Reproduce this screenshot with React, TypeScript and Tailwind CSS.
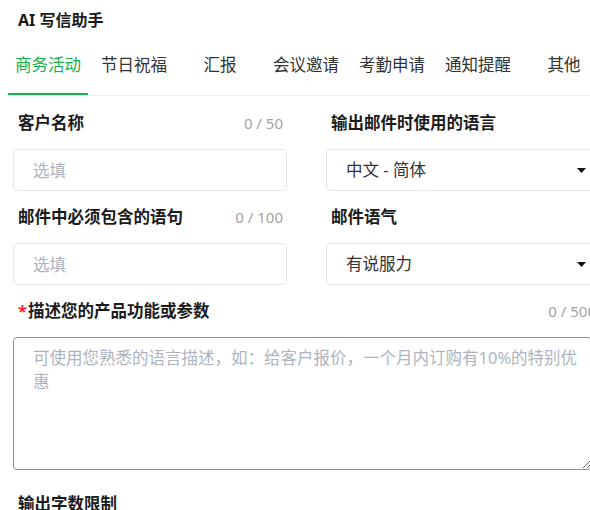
import * as React from "react";

const tabs = ["商务活动", "节日祝福", "汇报", "会议邀请", "考勤申请", "通知提醒", "其他"];

function Caret() {
  return (
    <svg width="9" height="5" viewBox="0 0 9 5" className="shrink-0">
      <path d="M0 0h9L4.5 5z" fill="#111" />
    </svg>
  );
}

function FieldLabel({ text, count, required }: { text: string; count?: string; required?: boolean }) {
  return (
    <div className="flex h-[24px] items-center justify-between pl-[5px] pr-[4px]">
      <span className="text-[16.5px] font-bold text-[#1b1b1b]">
        {required && <span className="mr-[1px] text-[#f5222d]">*</span>}
        {text}
      </span>
      {count && <span className="text-[15px] text-[#a3a3a3]">{count}</span>}
    </div>
  );
}

function TextInput() {
  return (
    <input
      className="mt-[14px] h-[42px] w-full rounded-[4px] border border-[#e8e8e8] bg-white px-[19px] text-[16.5px] text-[#333] outline-none placeholder:text-[#adb4c0]"
      placeholder="选填"
    />
  );
}

function SelectBox({ value }: { value: string }) {
  return (
    <div className="mt-[14px] flex h-[42px] w-full items-center justify-between rounded-[4px] border border-[#e8e8e8] bg-white pl-[19px] pr-[13px]">
      <span className="text-[16.5px] text-[#333]">{value}</span>
      <Caret />
    </div>
  );
}

export default function App() {
  const [active, setActive] = React.useState(0);

  return (
    <div className="h-[510px] w-[590px] overflow-hidden bg-white font-['Noto_Sans','Noto_Sans_CJK_SC',sans-serif]">
      <div className="w-[640px]">
        <div className="mt-[9px] flex h-[22px] items-center pl-[18px] text-[16px] font-bold text-[#1a1a1a]">
          AI 写信助手
        </div>

        {/* tab bar */}
        <div className="ml-[8px] mt-[22px] flex gap-[6px] border-b border-[#ececec]">
          {tabs.map((t, i) => (
            <button
              key={t}
              onClick={() => setActive(i)}
              className={
                "relative w-[80px] pb-[18px] text-center text-[16.5px] leading-[24px] " +
                (i === active ? "text-[#17b04c]" : "text-[#333]")
              }
            >
              {t}
              {i === active && <span className="absolute bottom-0 left-0 h-[2px] w-full bg-[#17b04c]" />}
            </button>
          ))}
        </div>

        <div className="ml-[13px] mt-[15px] w-[587px]">
          <div className="grid grid-cols-2 gap-x-[39px] gap-y-[14px]">
            <div>
              <FieldLabel text="客户名称" count="0 / 50" />
              <TextInput />
            </div>
            <div>
              <FieldLabel text="输出邮件时使用的语言" />
              <SelectBox value="中文 - 简体" />
            </div>
            <div>
              <FieldLabel text="邮件中必须包含的语句" count="0 / 100" />
              <TextInput />
            </div>
            <div>
              <FieldLabel text="邮件语气" />
              <SelectBox value="有说服力" />
            </div>
          </div>

          <div className="mt-[14px]">
            <FieldLabel text="描述您的产品功能或参数" count="0 / 500" required />
            <textarea
              className="mt-[14px] block h-[133px] w-[579px] rounded-[4px] border border-[#8f8f8f] bg-white pl-[19px] pr-[6px] pt-[8px] text-[16.5px] leading-[24px] text-[#333] outline-none placeholder:text-[#adb4c0]"
              placeholder="可使用您熟悉的语言描述，如：给客户报价，一个月内订购有10%的特别优惠"
            />
          </div>

          <div className="mt-[22px]">
            <FieldLabel text="输出字数限制" />
          </div>
        </div>
      </div>
    </div>
  );
}
